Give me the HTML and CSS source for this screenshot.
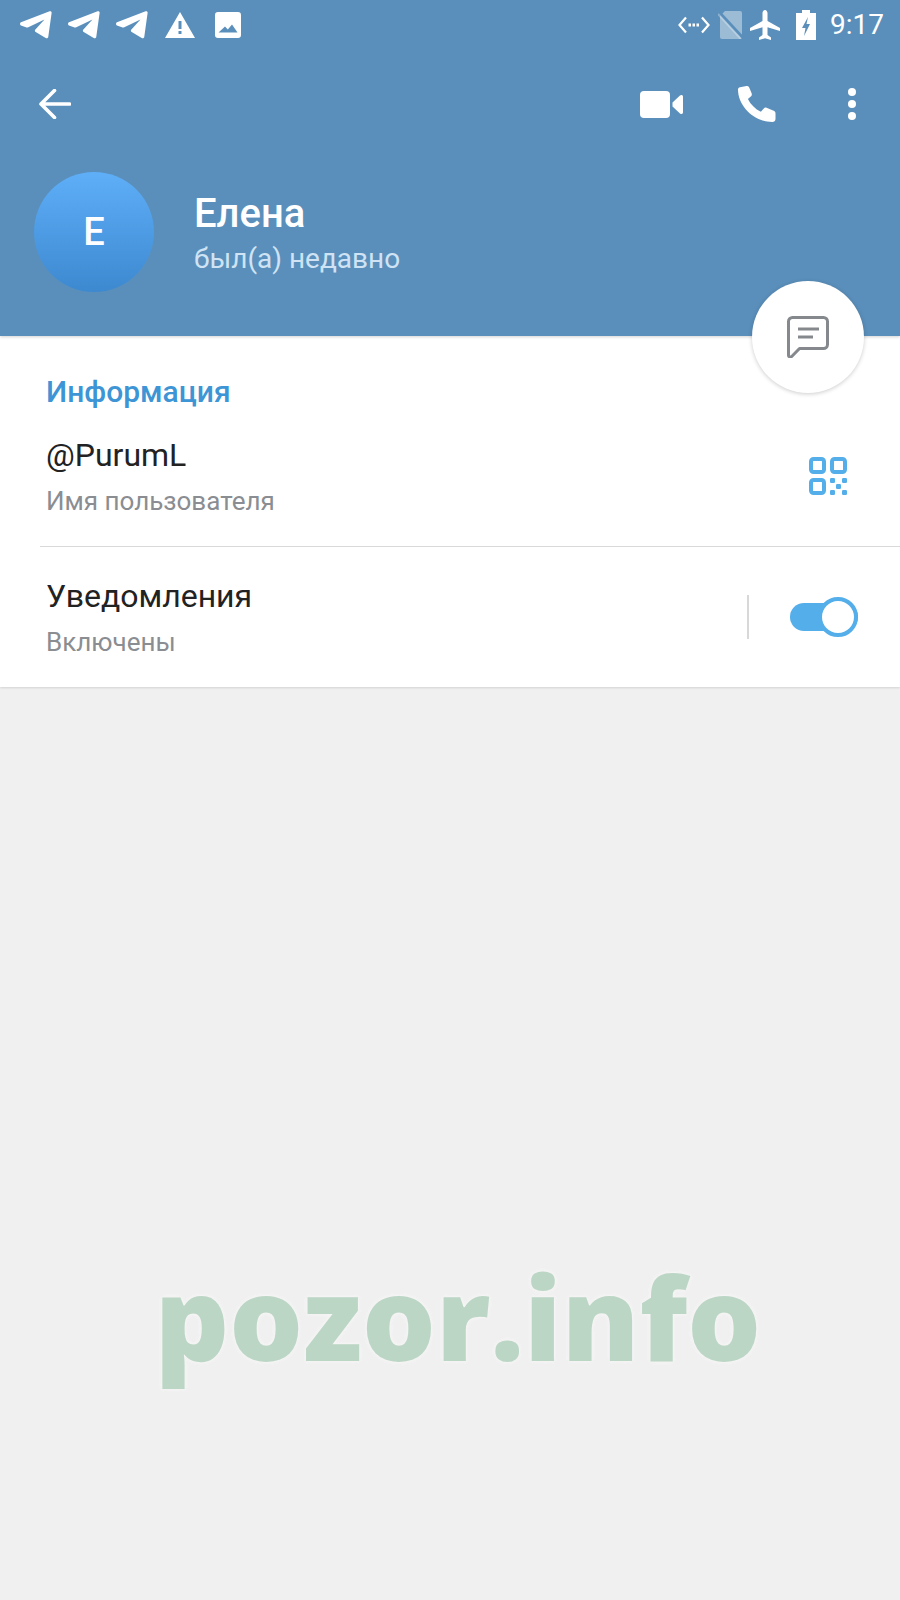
FILE: index.html
```html
<!DOCTYPE html>
<html lang="ru">
<head>
  <meta charset="UTF-8">
  <title>Елена</title>
  <link rel="stylesheet" href="styles.css">
</head>
<body>
  <svg class="defs" width="0" height="0">
    <symbol id="plane" viewBox="0 0 32 28">
      <path d="M1 11.200 29.600.3c1.200-.4 2.200.4 2 1.700L28.300 25.800c-.2 1.400-1.400 1.900-2.600 1.200l-10-6.100c-1-.6-1.100-1.500-.3-2.300L24.500 8.500 8.300 16.200c-.9.400-1.500.4-2.400.1L1 14.500c-1.300-.5-1.300-2.800 0-3.300z"/>
    </symbol>
  </svg>

  <header class="header">
    <div class="status-bar">
      <div class="status-left">
        <svg class="ic-plane"><use href="#plane"/></svg>
        <svg class="ic-plane"><use href="#plane"/></svg>
        <svg class="ic-plane"><use href="#plane"/></svg>
        <svg class="ic-warn" viewBox="0 0 30 26"><path fill-rule="evenodd" d="M15 0 30 26H0zM13.500 9v8h3V9zm0 10v3h3v-3z"/></svg>
        <svg class="ic-image" viewBox="0 0 26 26"><path fill-rule="evenodd" d="M3 0h20a3 3 0 0 1 3 3v20a3 3 0 0 1-3 3H3a3 3 0 0 1-3-3V3a3 3 0 0 1 3-3zM3.500 20.500h19L17 12.500l-4.200 5-2.800-3z"/></svg>
      </div>
      <div class="status-right">
        <svg class="ic-code" viewBox="0 0 32 18"><path d="M8 1.500 1.500 9 8 16.500M24 1.500 30.500 9 24 16.500"/><path d="M10.500 9h3M14.500 9h3M18.500 9h3" stroke-width="3" stroke-dasharray="2.500 1.500"/></svg>
        <svg class="ic-sim" viewBox="0 0 26 28"><path opacity=".4" d="M7 0h15a2 2 0 0 1 2 2v24a2 2 0 0 1-2 2H4a2 2 0 0 1-2-2V5z"/><path d="M1 1l24 26" stroke="#5a8fbb" stroke-width="3"/><path d="M0 3l23 25" stroke="#fff" stroke-opacity=".3" stroke-width="2"/></svg>
        <svg class="ic-air" viewBox="0 0 30 30"><path d="M30 21v-3L17.500 11V3c0-1.400-1.100-3-2.500-3s-2.500 1.600-2.500 3v8L0 18v3l12.500-3.800V25l-3.500 2.500V30l6-1.700 6 1.700v-2.500L17.500 25v-7.800z"/></svg>
        <svg class="ic-batt" viewBox="0 0 20 30"><path fill-rule="evenodd" d="M6 0h8v3h6v27H0V3h6zM12 7l-6 11h3.500L8 26l6-12h-3.500z"/></svg>
        <span class="clock">9:17</span>
      </div>
    </div>

    <div class="toolbar">
      <svg class="ic-back" viewBox="0 0 32 30"><path d="M30.500 15H2M15.500 1.500 2 15l13.500 13.500"/></svg>
      <div class="toolbar-actions">
        <svg class="ic-video" viewBox="0 0 43 27"><rect width="30" height="27" rx="4"/><path d="M32.500 11.500 40 4.500c1.300-1 3-.5 3 1.300v15.400c0 1.800-1.700 2.300-3 1.300l-7.500-7z"/></svg>
        <svg class="ic-phone" viewBox="0 0 38 36"><path d="M2 1.200 8.500 0c1.200-.2 2.200.4 2.700 1.600l2.500 6c.3 1 .1 1.900-.6 2.600l-3.200 2.700c2.700 5.400 7.200 10 13 12.800l2.900-3.300c.7-.7 1.700-1 2.700-.6l7.200 2.900c1.200.5 1.800 1.500 1.800 2.700V33c0 1.800-1.400 3-3.200 3C16 36 0 20 0 3.500 0 2.300.8 1.400 2 1.200z"/></svg>
        <div class="dots"><i></i><i></i><i></i></div>
      </div>
    </div>

    <div class="profile">
      <div class="avatar">Е</div>
      <div class="profile-text">
        <div class="name">Елена</div>
        <div class="seen">был(а) недавно</div>
      </div>
    </div>

    <div class="fab">
      <svg viewBox="0 0 42 42"><path d="M5.500 1.500h31a4 4 0 0 1 4 4v23a4 4 0 0 1-4 4H12.500l-7.800 8c-1.200 1.100-3.200.4-3.200-1.300V5.500a4 4 0 0 1 4-4z" stroke-linejoin="round"/><path d="M11 13h21M11 21h15" stroke-width="3.200"/></svg>
    </div>
  </header>

  <section class="info">
    <div class="section-title">Информация</div>
    <div class="row row-user">
      <div>
        <div class="row-main">@PurumL</div>
        <div class="row-sub">Имя пользователя</div>
      </div>
      <svg class="ic-qr" viewBox="0 0 38 38"><rect x="2" y="2" width="13" height="13" rx="2.500"/><rect x="23" y="2" width="13" height="13" rx="2.500"/><rect x="2" y="23" width="13" height="13" rx="2.500"/><g class="qr-dots"><rect x="21" y="21" width="5" height="5" rx="1.200"/><rect x="33" y="21" width="5" height="5" rx="1.200"/><rect x="27" y="27" width="5" height="5" rx="1.200"/><rect x="21" y="33" width="5" height="5" rx="1.200"/><rect x="33" y="33" width="5" height="5" rx="1.200"/></g></svg>
    </div>
    <div class="row-line"></div>
    <div class="row row-notify">
      <div>
        <div class="row-main">Уведомления</div>
        <div class="row-sub">Включены</div>
      </div>
      <div class="notify-ctl">
        <div class="vline"></div>
        <div class="switch"><div class="knob"></div></div>
      </div>
    </div>
  </section>

  <main class="empty">
    <div class="watermark">pozor.info</div>
  </main>
</body>
</html>
```

FILE: styles.css
```css
html, body {
  margin: 0;
  padding: 0;
}

body {
  width: 900px;
  height: 1600px;
  overflow: hidden;
  display: flex;
  flex-direction: column;
  background: #f0f0f0;
  font-family: Roboto, sans-serif;
}

.defs {
  position: absolute;
}

svg {
  display: block;
  fill: #fff;
  flex: none;
}

/* Header */
.header {
  position: relative;
  z-index: 1;
  height: 336px;
  background: #5a8fbb;
  flex: none;
  box-shadow: 0 1px 3px rgba(0, 0, 0, 0.18);
}

.status-bar {
  display: flex;
  justify-content: space-between;
  align-items: center;
  height: 50px;
  padding: 0 16px 0 20px;
}

.status-left {
  display: flex;
  align-items: center;
}

.ic-plane {
  width: 32px;
  height: 28px;
  margin-right: 16px;
}

.ic-warn {
  width: 30px;
  height: 26px;
  margin-left: 1px;
  margin-right: 20px;
}

.ic-image {
  width: 26px;
  height: 26px;
}

.status-right {
  display: flex;
  align-items: center;
}

.ic-code {
  width: 32px;
  height: 18px;
  margin-right: 8px;
  fill: none;
  stroke: #fff;
  stroke-width: 2.2;
}

.ic-sim {
  width: 26px;
  height: 28px;
  margin-right: 6px;
}

.ic-air {
  width: 30px;
  height: 30px;
  margin-right: 16px;
}

.ic-batt {
  width: 20px;
  height: 30px;
  margin-right: 14px;
}

.clock {
  color: #fff;
  font-size: 28px;
  line-height: 30px;
}

.toolbar {
  display: flex;
  justify-content: space-between;
  align-items: center;
  height: 108px;
  padding: 0 44px 0 39px;
}

.ic-back {
  width: 32px;
  height: 30px;
  fill: none;
  stroke: #fff;
  stroke-width: 3.6;
  stroke-linecap: round;
  stroke-linejoin: round;
}

.toolbar-actions {
  display: flex;
  align-items: center;
}

.ic-video {
  width: 43px;
  height: 27px;
  margin-right: 55px;
}

.ic-phone {
  width: 38px;
  height: 36px;
  margin-right: 72px;
}

.dots {
  display: flex;
  flex-direction: column;
  gap: 4px;
}

.dots i {
  width: 8px;
  height: 8px;
  border-radius: 50%;
  background: #fff;
}

.profile {
  display: flex;
  align-items: center;
  padding: 14px 0 0 34px;
}

.avatar {
  width: 120px;
  height: 120px;
  border-radius: 50%;
  background: linear-gradient(#5eaef8, #3d89d0);
  color: #fff;
  font-size: 38px;
  font-weight: 500;
  display: flex;
  align-items: center;
  justify-content: center;
}

.profile-text {
  margin-left: 40px;
  margin-top: 5px;
}

.name {
  color: #fff;
  font-size: 40px;
  font-weight: 500;
  line-height: 44px;
}

.seen {
  color: #cfe3f4;
  font-size: 28px;
  line-height: 36px;
  margin-top: 5px;
}

.fab {
  position: absolute;
  left: 752px;
  top: 281px;
  width: 112px;
  height: 112px;
  border-radius: 50%;
  background: #fff;
  box-shadow: 0 1px 4px rgba(0, 0, 0, 0.2);
  display: flex;
  align-items: center;
  justify-content: center;
}

.fab svg {
  width: 42px;
  height: 42px;
  fill: none;
  stroke: #85898d;
  stroke-width: 3;
}

/* Info card */
.info {
  background: #fff;
  height: 351px;
  flex: none;
  box-shadow: 0 1px 2px rgba(0, 0, 0, 0.12);
  box-sizing: border-box;
  padding-top: 39px;
}

.section-title {
  color: #3d95d5;
  font-size: 30px;
  font-weight: 500;
  line-height: 34px;
  padding-left: 46px;
}

.row {
  display: flex;
  justify-content: space-between;
  align-items: center;
  padding-left: 46px;
}

.row-user {
  padding-right: 53px;
  margin-top: 26px;
}

.row-main {
  color: #222;
  font-size: 32px;
  line-height: 40px;
}

.row-sub {
  color: #8a8d91;
  font-size: 26px;
  line-height: 32px;
  margin-top: 10px;
}

.ic-qr {
  width: 38px;
  height: 38px;
  fill: none;
  stroke: #54aeea;
  stroke-width: 4;
}

.qr-dots {
  fill: #54aeea;
  stroke: none;
}

.row-line {
  height: 1px;
  background: #d9d9d9;
  margin: 29px 0 0 40px;
}

.row-notify {
  margin-top: 29px;
  padding-right: 42px;
}

.notify-ctl {
  display: flex;
  align-items: center;
}

.vline {
  width: 2px;
  height: 44px;
  background: #d8d8d8;
  margin-right: 41px;
}

.switch {
  position: relative;
  width: 68px;
  height: 28px;
  border-radius: 14px;
  background: #54aeea;
}

.knob {
  position: absolute;
  right: 0;
  top: -6px;
  width: 32px;
  height: 32px;
  border: 4px solid #54aeea;
  border-radius: 50%;
  background: #fff;
}

/* Watermark */
.empty {
  flex: 1;
  display: flex;
  justify-content: center;
}

.watermark {
  margin-top: 554px;
  margin-left: 16px;
  color: #bcd6c5;
  font-family: "Open Sans", sans-serif;
  font-size: 116px;
  font-weight: 800;
  line-height: 150px;
  text-shadow: 0 0 4px #f6f6f6, 0 0 4px #f6f6f6;
}
```
